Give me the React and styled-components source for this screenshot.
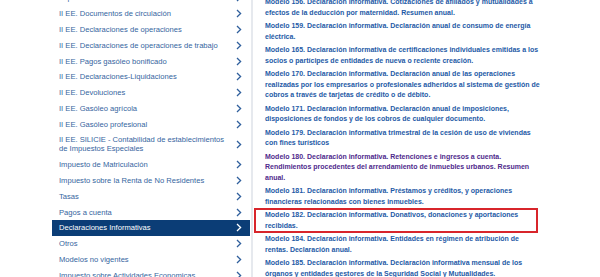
import React from 'react';
import styled, { createGlobalStyle } from 'styled-components';

const GlobalStyle = createGlobalStyle`
  html, body {
    margin: 0;
    padding: 0;
    background: #ffffff;
    overflow: hidden;
  }
  body {
    font-family: "Liberation Sans", Arial, sans-serif;
  }
`;

const Page = styled.div`
  width: 600px;
  height: 277px;
  overflow: hidden;
`;

const Layout = styled.div`
  display: flex;
  flex-direction: row;
  align-items: flex-start;
  padding-left: 52px;
`;

const Sidebar = styled.ul`
  list-style: none;
  margin: -10px 0 0 0;
  padding: 0;
  width: 198px;
  flex-shrink: 0;
`;

const NavItem = styled.li`
  display: flex;
  align-items: center;
  justify-content: space-between;
  padding: 3.4px 8px 3.4px 7px;
  background: ${(p) => (p.active ? '#0b3d76' : 'transparent')};
  color: ${(p) => (p.active ? '#ffffff' : '#3565a0')};
  font-size: 7.6px;
  line-height: 9px;
`;

const NavLabel = styled.span`
  max-width: 170px;
`;

const Divider = styled.div`
  width: 2px;
  height: 290px;
  margin-top: -10px;
  margin-left: 1px;
  background: #e6e9ee;
  flex-shrink: 0;
`;

const Content = styled.div`
  display: flex;
  flex-direction: column;
  gap: 3px;
  margin-top: -3px;
  padding-left: 12px;
`;

const Entry = styled.div`
  position: relative;
  width: 277px;
  font-size: 7px;
  font-weight: bold;
  line-height: 10.5px;
  color: ${(p) => (p.visited ? '#4f2a8c' : '#1e5aa6')};

  &::after {
    content: '';
    display: ${(p) => (p.boxed ? 'block' : 'none')};
    position: absolute;
    left: -11px;
    right: 4px;
    top: -2px;
    bottom: -2px;
    border: 2px solid #d8252b;
    pointer-events: none;
  }
`;

const Chevron = ({ color }) => (
  <svg width="6" height="9" viewBox="0 0 6 9" style={{ flexShrink: 0 }}>
    <path d="M1 1 L4.6 4.5 L1 8" fill="none" stroke={color} strokeWidth="1.3" />
  </svg>
);

const navItems = [
  'Impuesto sobre el Patrimonio',
  'II EE. Documentos de circulación',
  'II EE. Declaraciones de operaciones',
  'II EE. Declaraciones de operaciones de trabajo',
  'II EE. Pagos gasóleo bonificado',
  'II EE. Declaraciones-Liquidaciones',
  'II EE. Devoluciones',
  'II EE. Gasóleo agrícola',
  'II EE. Gasóleo profesional',
  'II EE. SILICIE - Contabilidad de establecimientos de Impuestos Especiales',
  'Impuesto de Matriculación',
  'Impuesto sobre la Renta de No Residentes',
  'Tasas',
  'Pagos a cuenta',
  'Declaraciones Informativas',
  'Otros',
  'Modelos no vigentes',
  'Impuesto sobre Actividades Economicas',
];

const entries = [
  { text: 'Modelo 156. Declaración informativa. Cotizaciones de afiliados y mutualidades a efectos de la deducción por maternidad. Resumen anual.' },
  { text: 'Modelo 159. Declaración informativa. Declaración anual de consumo de energía eléctrica.' },
  { text: 'Modelo 165. Declaración informativa de certificaciones individuales emitidas a los socios o partícipes de entidades de nueva o reciente creación.' },
  { text: 'Modelo 170. Declaración informativa. Declaración anual de las operaciones realizadas por los empresarios o profesionales adheridos al sistema de gestión de cobros a través de tarjetas de crédito o de débito.' },
  { text: 'Modelo 171. Declaración informativa. Declaración anual de imposiciones, disposiciones de fondos y de los cobros de cualquier documento.' },
  { text: 'Modelo 179. Declaración informativa trimestral de la cesión de uso de viviendas con fines turísticos' },
  { text: 'Modelo 180. Declaración informativa. Retenciones e ingresos a cuenta. Rendimientos procedentes del arrendamiento de inmuebles urbanos. Resumen anual.', visited: true },
  { text: 'Modelo 181. Declaración informativa. Préstamos y créditos, y operaciones financieras relacionadas con bienes inmuebles.' },
  { text: 'Modelo 182. Declaración informativa. Donativos, donaciones y aportaciones recibidas.', boxed: true },
  { text: 'Modelo 184. Declaración informativa. Entidades en régimen de atribución de rentas. Declaración anual.' },
  { text: 'Modelo 185. Declaración informativa. Declaración informativa mensual de los órganos y entidades gestores de la Seguridad Social y Mutualidades.' },
  { text: 'Modelo 187. Declaración informativa. Acciones y participaciones representativas del capital o del patrimonio de las instituciones de inversión colectiva.' },
];

export default function App() {
  return (
    <Page>
      <GlobalStyle />
      <Layout>
        <Sidebar>
          {navItems.map((label) => {
            const active = label === 'Declaraciones Informativas';
            return (
              <NavItem key={label} active={active}>
                <NavLabel>{label}</NavLabel>
                <Chevron color={active ? '#ffffff' : '#2f5f9c'} />
              </NavItem>
            );
          })}
        </Sidebar>
        <Divider />
        <Content>
          {entries.map((e) => (
            <Entry key={e.text} visited={e.visited} boxed={e.boxed}>
              {e.text}
            </Entry>
          ))}
        </Content>
      </Layout>
    </Page>
  );
}
